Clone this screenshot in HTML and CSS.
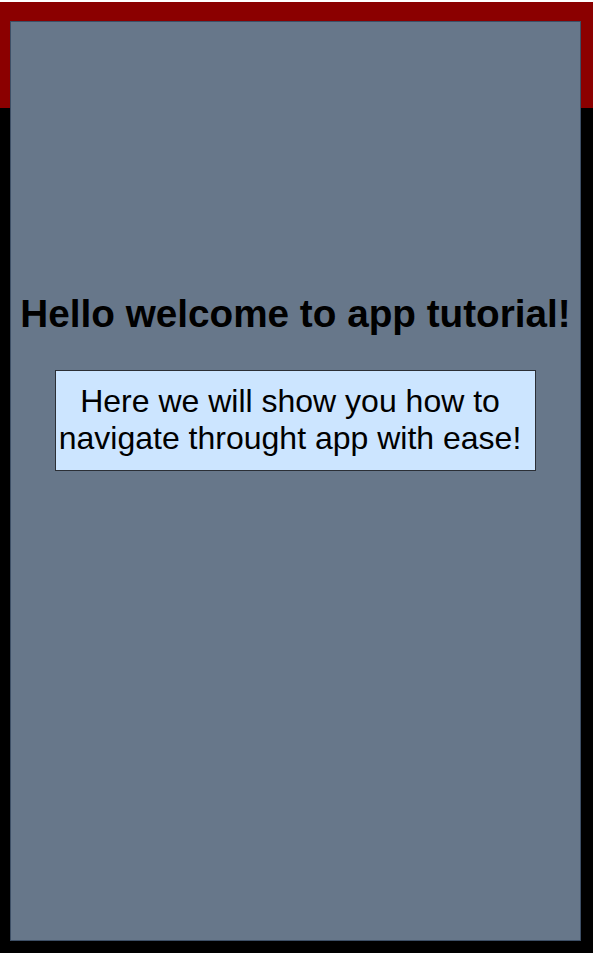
FILE: index.html
```html
<!DOCTYPE html>
<html>
<head>
<meta charset="utf-8">
<link rel="stylesheet" href="styles.css">
</head>
<body>
<div class="frame">
  <main class="panel">
    <h1 class="title">Hello welcome to app tutorial!</h1>
    <p class="intro">Here we will show you how to navigate throught app with ease!</p>
  </main>
</div>
</body>
</html>
```

FILE: styles.css
```css
html, body {
  margin: 0;
  padding: 0;
  background: #ffffff;
}
body {
  font-family: "Liberation Sans", Arial, sans-serif;
}
.frame {
  margin-top: 2px;
  width: 593px;
  height: 951px;
  box-sizing: border-box;
  padding: 19px 12px 12px 10px;
  background: linear-gradient(#8b0000 0 106px, #000000 106px);
}
.panel {
  box-sizing: border-box;
  height: 920px;
  border: 1px solid #3d4f66;
  background: #67778a;
  display: flex;
  flex-direction: column;
  align-items: center;
  padding-top: 270px;
}
.title {
  margin: 0;
  height: 44px;
  font-size: 38.7px;
  font-weight: bold;
  line-height: 44px;
  color: #000;
  text-align: center;
  white-space: nowrap;
}
.intro {
  box-sizing: border-box;
  margin: 34px 0 0 0;
  width: 481px;
  height: 101px;
  padding: 12px 11px 0 0;
  border: 1px solid #2b2f36;
  background: #cce5ff;
  font-size: 32px;
  line-height: normal;
  color: #000;
  text-align: center;
}
```
